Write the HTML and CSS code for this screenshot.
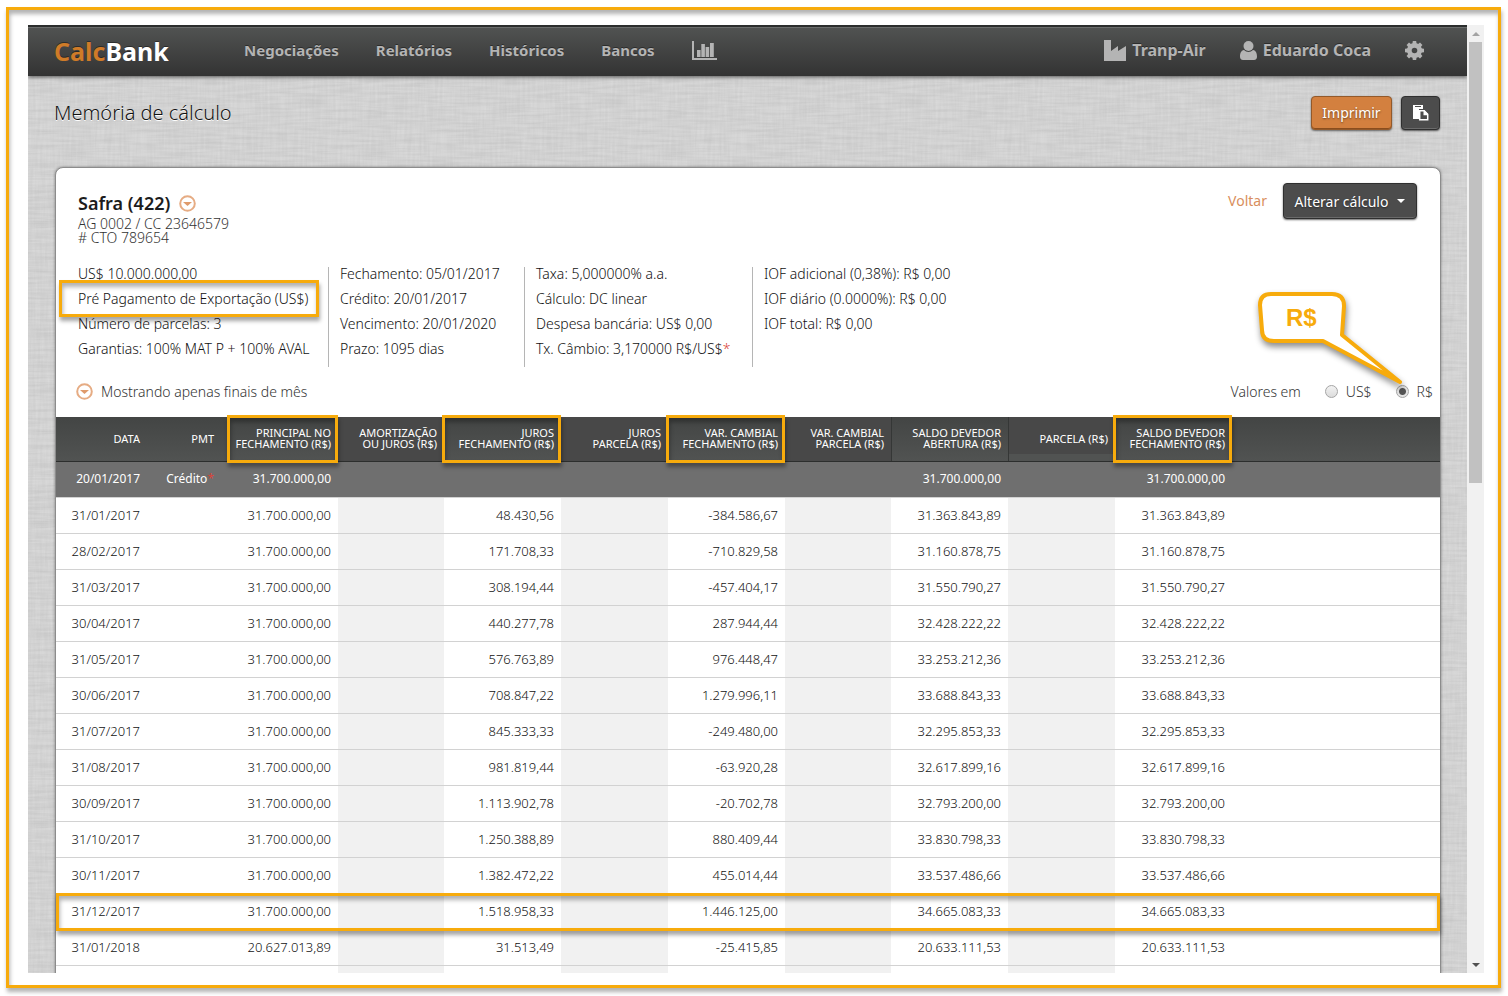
FILE: index.html
```html
<!DOCTYPE html>
<html lang="pt-BR">
<head>
<meta charset="utf-8">
<title>CalcBank - Memória de cálculo</title>
<link rel="stylesheet" href="styles.css">
</head>
<body>
<div class="frame">
<div class="page">
  <header class="navbar">
    <a class="brand" href="#"><span class="brand-accent">Calc</span>Bank</a>
    <nav class="nav-main">
      <a href="#">Negociações</a>
      <a href="#">Relatórios</a>
      <a href="#">Históricos</a>
      <a href="#">Bancos</a>
      <a href="#" aria-label="Gráficos"><svg width="26" height="20" viewBox="0 0 26 20" fill="currentColor"><path d="M0 0h2v17h23v2H0zM5 9h3.600v7H5zM9.300 3h3.600v13H9.300zM13.600 6h3.600v10h-3.600zM18 2h3.800v14H18z"/></svg></a>
    </nav>
    <nav class="nav-user">
      <a href="#"><svg width="22" height="21" viewBox="0 0 22 21" fill="currentColor"><path d="M0 0h7v11l7-5v5l8-5v15H0z"/></svg>Tranp-Air</a>
      <a href="#"><svg width="17" height="19" viewBox="0 0 17 19" fill="currentColor"><circle cx="8.500" cy="5" r="5"/><path d="M4 9c2.500 2.500 6.500 2.500 9 0 3 .5 4 3.500 4 6.500 0 2-1 3.500-3 3.500H3c-2 0-3-1.500-3-3.500C0 12.500 1 9.500 4 9z"/></svg>Eduardo Coca</a>
      <a href="#" aria-label="Configurações"><svg width="19" height="19" viewBox="-9.500 -9.500 19 19" fill="currentColor"><path fill-rule="evenodd" d="M0-7.500a7.500 7.500 0 1 0 0 15 7.500 7.500 0 1 0 0-15zM0-2.800a2.800 2.800 0 1 1 0 5.600 2.800 2.800 0 1 1 0-5.600z"/><g><path id="tooth" d="M-2.200-6l.5-3.500h3.400l.5 3.500z"/><use href="#tooth" transform="rotate(45)"/><use href="#tooth" transform="rotate(90)"/><use href="#tooth" transform="rotate(135)"/><use href="#tooth" transform="rotate(180)"/><use href="#tooth" transform="rotate(225)"/><use href="#tooth" transform="rotate(270)"/><use href="#tooth" transform="rotate(315)"/></g></svg></a>
    </nav>
  </header>

  <div class="title-row">
    <h1>Memória de cálculo</h1>
    <button class="btn btn-primary" type="button">Imprimir</button>
    <button class="btn btn-icon" type="button" aria-label="Copiar"><svg width="17" height="16" viewBox="0 0 17 16"><path fill="#fff" d="M1 0h10v4H7v10H1z"/><path fill="#4c4c4c" d="M3 1h6v1H3z"/><path fill="#4c4c4c" stroke="#fff" stroke-width="1.500" d="M7.700 5.800h4.500l3.500 3.500v5.500h-8z"/><path fill="#fff" d="M11.500 5.500h1l3.500 3.500v1.200h-4.500z"/></svg></button>
  </div>

  <main class="card">
    <div class="card-head">
      <div class="bank">
        <h2>Safra (422) <svg class="toggle" width="17" height="17" viewBox="0 0 17 17"><circle cx="8.500" cy="8.500" r="7.300"/><path d="M4 7h9l-4.500 4z"/></svg></h2>
        <p>AG 0002 / CC 23646579</p>
        <p># CTO 789654</p>
      </div>
      <a class="back" href="#">Voltar</a>
      <button class="btn btn-menu" type="button">Alterar cálculo<span class="caret"></span></button>
    </div>

    <div class="info">
      <ul>
        <li>US$ 10.000.000,00</li>
        <li><span class="mark mark-product">Pré Pagamento de Exportação (US$)</span></li>
        <li>Número de parcelas: 3</li>
        <li>Garantias: 100% MAT P + 100% AVAL</li>
      </ul>
      <ul>
        <li>Fechamento: 05/01/2017</li>
        <li>Crédito: 20/01/2017</li>
        <li>Vencimento: 20/01/2020</li>
        <li>Prazo: 1095 dias</li>
      </ul>
      <ul>
        <li>Taxa: 5,000000% a.a.</li>
        <li>Cálculo: DC linear</li>
        <li>Despesa bancária: US$ 0,00</li>
        <li>Tx. Câmbio: 3,170000 R$/US$<span class="required">*</span></li>
      </ul>
      <ul>
        <li>IOF adicional (0,38%): R$ 0,00</li>
        <li>IOF diário (0.0000%): R$ 0,00</li>
        <li>IOF total: R$ 0,00</li>
      </ul>
    </div>

    <div class="filters">
      <svg class="toggle" width="17" height="17" viewBox="0 0 17 17"><circle cx="8.500" cy="8.500" r="7.300"/><path d="M4 7h9l-4.500 4z"/></svg>
      <span class="filter-text">Mostrando apenas finais de mês</span>
      <span class="currency-label">Valores em</span>
      <label class="currency"><input type="radio" name="currency">US$</label>
      <label class="currency"><input type="radio" name="currency" checked>R$
        <span class="callout"><svg width="154" height="106" viewBox="0 0 154 106"><path d="M16 8h61q12 0 12 12l-2 29 58 47-77-41H19Q7 55 7 44L5 19Q5 8 16 8z"/></svg><b>R$</b></span>
      </label>
    </div>

    <table class="ledger">
      <colgroup><col class="c-date"><col class="c-pmt"><col class="c-wide"><col class="c-slim"><col class="c-wide"><col class="c-mid"><col class="c-wide"><col class="c-slim"><col class="c-wide"><col class="c-mid"><col class="c-wide"><col></colgroup>
      <thead><tr>
        <th>DATA</th><th>PMT</th><th class="mark mark-first">PRINCIPAL NO<br>FECHAMENTO (R$)</th><th class="alt">AMORTIZAÇÃO<br>OU JUROS (R$)</th><th class="mark">JUROS<br>FECHAMENTO (R$)</th><th class="alt">JUROS<br>PARCELA (R$)</th><th class="mark">VAR. CAMBIAL<br>FECHAMENTO (R$)</th><th class="alt">VAR. CAMBIAL<br>PARCELA (R$)</th><th class="divided">SALDO DEVEDOR<br>ABERTURA (R$)</th><th class="alt alt-short divided">PARCELA (R$)</th><th class="mark">SALDO DEVEDOR<br>FECHAMENTO (R$)</th><th></th>
      </tr></thead>
      <tbody>
        <tr class="credit"><td>20/01/2017</td><td>Crédito<span class="required">*</span></td><td>31.700.000,00</td><td></td><td></td><td></td><td></td><td></td><td>31.700.000,00</td><td></td><td>31.700.000,00</td><td></td></tr>
        <tr><td>31/01/2017</td><td></td><td>31.700.000,00</td><td></td><td>48.430,56</td><td></td><td>-384.586,67</td><td></td><td>31.363.843,89</td><td></td><td>31.363.843,89</td><td></td></tr>
        <tr><td>28/02/2017</td><td></td><td>31.700.000,00</td><td></td><td>171.708,33</td><td></td><td>-710.829,58</td><td></td><td>31.160.878,75</td><td></td><td>31.160.878,75</td><td></td></tr>
        <tr><td>31/03/2017</td><td></td><td>31.700.000,00</td><td></td><td>308.194,44</td><td></td><td>-457.404,17</td><td></td><td>31.550.790,27</td><td></td><td>31.550.790,27</td><td></td></tr>
        <tr><td>30/04/2017</td><td></td><td>31.700.000,00</td><td></td><td>440.277,78</td><td></td><td>287.944,44</td><td></td><td>32.428.222,22</td><td></td><td>32.428.222,22</td><td></td></tr>
        <tr><td>31/05/2017</td><td></td><td>31.700.000,00</td><td></td><td>576.763,89</td><td></td><td>976.448,47</td><td></td><td>33.253.212,36</td><td></td><td>33.253.212,36</td><td></td></tr>
        <tr><td>30/06/2017</td><td></td><td>31.700.000,00</td><td></td><td>708.847,22</td><td></td><td>1.279.996,11</td><td></td><td>33.688.843,33</td><td></td><td>33.688.843,33</td><td></td></tr>
        <tr><td>31/07/2017</td><td></td><td>31.700.000,00</td><td></td><td>845.333,33</td><td></td><td>-249.480,00</td><td></td><td>32.295.853,33</td><td></td><td>32.295.853,33</td><td></td></tr>
        <tr><td>31/08/2017</td><td></td><td>31.700.000,00</td><td></td><td>981.819,44</td><td></td><td>-63.920,28</td><td></td><td>32.617.899,16</td><td></td><td>32.617.899,16</td><td></td></tr>
        <tr><td>30/09/2017</td><td></td><td>31.700.000,00</td><td></td><td>1.113.902,78</td><td></td><td>-20.702,78</td><td></td><td>32.793.200,00</td><td></td><td>32.793.200,00</td><td></td></tr>
        <tr><td>31/10/2017</td><td></td><td>31.700.000,00</td><td></td><td>1.250.388,89</td><td></td><td>880.409,44</td><td></td><td>33.830.798,33</td><td></td><td>33.830.798,33</td><td></td></tr>
        <tr><td>30/11/2017</td><td></td><td>31.700.000,00</td><td></td><td>1.382.472,22</td><td></td><td>455.014,44</td><td></td><td>33.537.486,66</td><td></td><td>33.537.486,66</td><td></td></tr>
        <tr class="mark-row"><td>31/12/2017</td><td></td><td>31.700.000,00</td><td></td><td>1.518.958,33</td><td></td><td>1.446.125,00</td><td></td><td>34.665.083,33</td><td></td><td>34.665.083,33</td><td></td></tr>
        <tr><td>31/01/2018</td><td></td><td>20.627.013,89</td><td></td><td>31.513,49</td><td></td><td>-25.415,85</td><td></td><td>20.633.111,53</td><td></td><td>20.633.111,53</td><td></td></tr>
        <tr><td></td><td></td><td></td><td></td><td></td><td></td><td></td><td></td><td></td><td></td><td></td><td></td></tr>
      </tbody>
    </table>
  </main>
</div>
<div class="scrollbar"><span class="arrow arrow-up"></span><span class="thumb"></span><span class="arrow arrow-down"></span></div>
</div>
</body>
</html>
```
FILE: styles.css
```css
* { box-sizing: border-box; }

:root {
  --mark: #f7ab0c;
  --text: #333;
}

body {
  margin: 0;
  height: 100vh;
  padding: 7px 7px 8px 6px;
  display: flex;
  background: #fff;
  color: var(--text);
  font: 14px/25px "Noto Sans", sans-serif;
  overflow: hidden;
}

h1, h2, p, ul { margin: 0; padding: 0; }
ul { list-style: none; }
a { text-decoration: none; }
button { font: inherit; }

.frame {
  flex: 1;
  min-width: 0;
  display: flex;
  padding: 15px 14px 12px 19px;
  border: 3px solid var(--mark);
  box-shadow: 1px 4px 4px rgba(0, 0, 0, .3), inset 1px 4px 4px rgba(0, 0, 0, .3);
}

/* Linen: two stretched noise layers, one per thread direction */
.page {
  flex: 1;
  min-width: 0;
  overflow: hidden;
  background:
    url("data:image/svg+xml,%3Csvg xmlns='http://www.w3.org/2000/svg' width='300' height='300'%3E%3Cfilter id='a' x='0' y='0' width='1' height='1'%3E%3CfeTurbulence type='fractalNoise' baseFrequency='.4 .03' numOctaves='2' stitchTiles='stitch'/%3E%3CfeColorMatrix values='0 0 0 0 1 0 0 0 0 1 0 0 0 0 1 .3 0 0 0 -.1'/%3E%3C/filter%3E%3Cfilter id='b' x='0' y='0' width='1' height='1'%3E%3CfeTurbulence type='fractalNoise' baseFrequency='.03 .4' numOctaves='2' stitchTiles='stitch'/%3E%3CfeColorMatrix values='0 0 0 0 0 0 0 0 0 0 0 0 0 0 0 .1 0 0 0 -.03'/%3E%3C/filter%3E%3Crect width='300' height='300' filter='url(%23a)'/%3E%3Crect width='300' height='300' filter='url(%23b)'/%3E%3C/svg%3E"),
    #d3d3d3;
}

.navbar {
  display: flex;
  align-items: center;
  height: 51px;
  padding: 0 43px 0 26px;
  border-top: 2px solid #2b2d2d;
  background: linear-gradient(#515352, #333);
  box-shadow: inset 0 1px #6b6d6c, 0 1px 4px rgba(0, 0, 0, .6);
  font-weight: 700;
  font-size: 15px;
}
.navbar a { color: #b4b4b4; text-shadow: 0 -1px rgba(0, 0, 0, .4); display: flex; align-items: center; }
.navbar .brand { width: 190px; height: 46px; font-size: 25px; color: #fff; }
.navbar .brand-accent { color: #cf7b28; }
.nav-main, .nav-user { padding-bottom: 2px; }
.nav-main { display: flex; gap: 37px; }
.nav-user { display: flex; gap: 34px; margin-left: auto; font-size: 16px; }
.nav-user a { gap: 6px; }

.title-row {
  display: flex;
  align-items: center;
  gap: 9px;
  height: 73px;
  padding: 0 27px 0 26px;
}
h1 {
  flex: 1;
  font-size: 20px;
  font-weight: 300;
  color: #111;
  text-shadow: 0 1px #fff;
}

.btn {
  height: 34px;
  border: 1px solid #2f2f2f;
  border-radius: 4px;
  background: #4c4c4c;
  color: #fff;
  text-shadow: 0 1px 2px rgba(0, 0, 0, .5);
  box-shadow: inset 0 -1px #6a6a6a, 0 1px 2px rgba(0, 0, 0, .6);
  display: flex;
  align-items: center;
  justify-content: center;
}
.btn-primary { width: 81px; background: #d3803f; border-color: #93592a; box-shadow: inset 0 -1px #8a4d1d, 0 1px 2px rgba(0, 0, 0, .5); }
.btn-icon { width: 39px; }
.btn-menu { width: 134px; height: 36px; }
.caret { margin-left: 9px; border: 4px solid transparent; border-top-color: #fff; border-bottom: 0; }

.card {
  margin: 18px 26px 0 27px;
  border: 1px solid #8c8c8c;
  border-radius: 8px 8px 0 0;
  background: #fff;
  box-shadow: 0 0 3px rgba(0, 0, 0, .4);
}
.card-head {
  display: flex;
  align-items: flex-start;
  padding: 15px 23px 0 22px;
}
.bank { flex: 1; padding-top: 7px; }
.bank p { line-height: 14px; font-size: 14px; font-weight: 300; }
h2 { display: flex; align-items: center; gap: 9px; font-size: 18px; line-height: 27px; color: #1c1c1c; font-weight: 600; }
.toggle circle { fill: none; stroke: #e6ac84; stroke-width: 2; }
.toggle path { fill: #df9b6c; }
.back { margin: 5px 16px 0 0; color: #d98e5c; }

.info {
  display: flex;
  padding: 22px 22px 0;
  font-weight: 300;
  color: #111;
}
.info ul { height: 100px; padding: 0 0 0 11px; border-left: 1px solid #b5b5b5; }
.info li { white-space: nowrap; }
.info li:first-child { margin-top: -6px; }
.info ul:nth-child(1) { width: 250px; padding: 0; border: 0; }
.info ul:nth-child(2) { width: 196px; }
.info ul:nth-child(3) { width: 228px; }
.required { color: #d9443a; }

.filters {
  display: flex;
  align-items: center;
  height: 50px;
  padding: 0 7px 2px 20px;
  color: #333;
  font-weight: 300;
}
.filter-text { flex: 1; margin-left: 8px; }
.currency { display: flex; align-items: center; margin-left: 24px; position: relative; }
.currency input {
  appearance: none;
  width: 13px;
  height: 13px;
  margin: 0 8px 0 0;
  border: 1px solid #a5a5a5;
  border-radius: 50%;
  background: linear-gradient(#f2f2f2, #dcdcdc);
}
.currency input:checked { background: radial-gradient(circle, #555 0 3px, #e4e4e4 4px); }

.callout { position: absolute; right: 24px; bottom: 12px; width: 154px; height: 106px; }
.callout svg { display: block; filter: drop-shadow(1px 4px 3px rgba(0, 0, 0, .45)); }
.callout path { fill: #fff; stroke: var(--mark); stroke-width: 4; stroke-linejoin: round; }
.callout b { position: absolute; top: 18px; left: 31px; font: 700 24px/28px "Liberation Sans", Arial, sans-serif; color: var(--mark); }

.ledger {
  width: 100%;
  table-layout: fixed;
  border-collapse: separate;
  border-spacing: 0;
  font-size: 13px;
  font-weight: 300;
  color: #111;
}
.c-date { width: 91px; }
.c-pmt { width: 74px; }
.c-wide { width: 117px; }
.c-mid { width: 107px; }
.c-slim { width: 106px; }
.ledger th {
  height: 45px;
  padding: 0 7px 2px 0;
  border-bottom: 1px solid #2c2e2d;
  background: linear-gradient(#434544, #515352);
  color: #fff;
  font-size: 11px;
  font-weight: 400;
  line-height: 11px;
  text-align: right;
  white-space: nowrap;
}
.ledger th.alt { background: #484848; }
.ledger th.alt-short { background: linear-gradient(#484848 37px, #515352 37px); }
.ledger th.divided { box-shadow: inset 1px 0 #353736; }
.ledger td {
  height: 36px;
  padding: 0 7px 1px 0;
  border-bottom: 1px solid #d2d2d2;
  text-align: right;
  line-height: 20px;
}
.ledger td:nth-child(2n+4):not(:last-child) { background: #f1f1f1; }
.ledger .credit td:nth-child(n) { background: #6f6f6f; color: #fff; font-weight: 400; font-size: 12px; }

.mark, .mark-row { position: relative; }
.mark::after, .mark-row td:first-child::after {
  content: "";
  position: absolute;
  z-index: 1;
  inset: -2px 0 -2px -2px;
  border: 3px solid var(--mark);
  box-shadow: 1px 4px 4px rgba(0, 0, 0, .35), inset 1px 4px 4px rgba(0, 0, 0, .3);
}
.mark.mark-first::after { left: 6px; }
.mark.mark-product::after { inset: -9px -11px -9px -19px; }
.mark-row td:first-child::after { inset: -1px 0 -1px 0; }

.scrollbar {
  width: 17px;
  display: flex;
  flex-direction: column;
  align-items: center;
  background: #f1f1f1;
}
.arrow { height: 17px; display: flex; align-items: center; }
.arrow::before { content: ""; border: 4px solid transparent; }
.arrow-up::before { border-bottom-color: #a3a3a3; border-top: 0; }
.arrow-down::before { border-top-color: #505050; border-bottom: 0; }
.thumb { width: 13px; height: 441px; margin-bottom: auto; background: #c1c1c1; }
```
